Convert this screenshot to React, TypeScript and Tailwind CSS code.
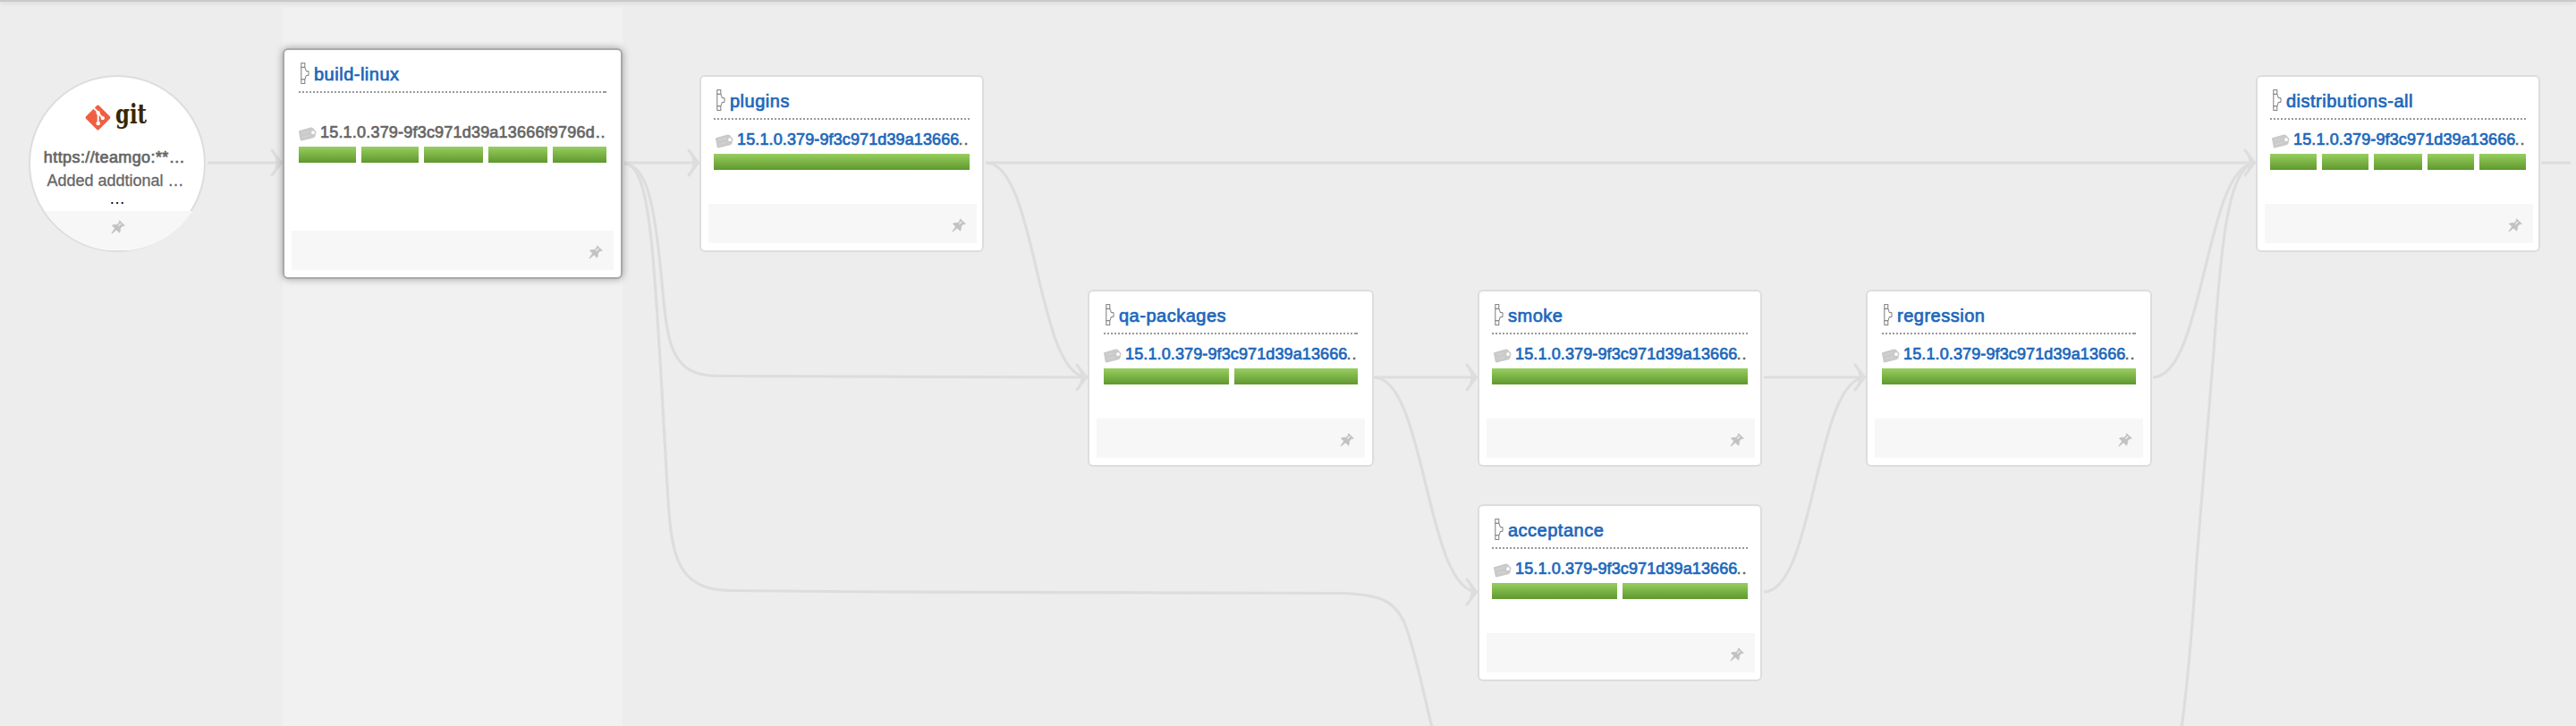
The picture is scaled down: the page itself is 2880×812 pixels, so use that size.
import React from "react";

type Stage = {
  name: string;
  left: number;
  top: number;
  width: number;
  bars: number[];
  current?: boolean;
};

const stages: Stage[] = [
  { name: "build-linux", left: 316, top: 54, width: 380, bars: [64, 64, 66, 66, 60], current: true },
  { name: "plugins", left: 782, top: 84, width: 318, bars: [286] },
  { name: "qa-packages", left: 1216, top: 324, width: 320, bars: [140, 138] },
  { name: "smoke", left: 1652, top: 324, width: 318, bars: [286] },
  { name: "acceptance", left: 1652, top: 564, width: 318, bars: [140, 140] },
  { name: "regression", left: 2086, top: 324, width: 320, bars: [284] },
  { name: "distributions-all", left: 2522, top: 84, width: 318, bars: [52, 52, 54, 52, 52] },
];

const links = [
  "M232 182H316",
  "M698 182H782",
  "M698 183C722 184 731 225 738.5 300C746 380 746 420 802 420.5C900 421.5 1000 422 1216 422",
  "M698 183C717 184 725 225 731 300C738 385 742 480 747 560C751 620 757 660 815 660.5L980 662L1500 663.5C1540 665 1558 670 1570 696C1582 726 1592 778 1601 814",
  "M1102 182H2522",
  "M1102 182C1160 182 1158 422 1216 422",
  "M1536 422H1652",
  "M1536 422C1594 422 1594 662 1652 662",
  "M1972 422H2086",
  "M1972 662C2029 662 2029 422 2086 422",
  "M2407 422C2465 422 2465 182 2522 182",
  "M2439 814C2447 755 2452 690 2456 626C2463 548 2469 470 2475 393C2483 270 2492 184 2522 182",
  "M2841 182H2874",
];

const arrows: { x: number; y: number; solid: boolean }[] = [
  { x: 316, y: 182, solid: true },
  { x: 782, y: 182, solid: false },
  { x: 1216, y: 422, solid: true },
  { x: 1652, y: 422, solid: false },
  { x: 1652, y: 662, solid: false },
  { x: 2086, y: 422, solid: true },
  { x: 2522, y: 182, solid: true },
];

function PipeIcon() {
  return (
    <svg className="h-6 w-[10px] shrink-0" viewBox="0 0 10 24" fill="#fff" stroke="#7c7c7c" strokeWidth="1">
      <path d="M0.8 5.2V18.8H4.8L6.2 15V14.4H9V9.6H6.2V9L4.8 5.2Z" />
      <rect x="0.8" y="0.6" width="4" height="4.6" />
      <rect x="0.8" y="18.8" width="4" height="4.6" />
    </svg>
  );
}

function TagIcon() {
  return (
    <svg className="h-4 w-5 shrink-0" viewBox="0 0 20 16">
      <path
        fillRule="evenodd"
        fill="#cacaca"
        d="M0.3 4.2L13.2 0.6Q14.6 0.4 15.8 1L19.6 5.2L18.4 10.6Q17.9 11.8 16.4 12.2L3.2 15.4Q2 15.6 1.7 14.4L0 5.4Q-0.1 4.5 0.3 4.2ZM16 4.3A1.9 1.9 0 1 0 16 8.1A1.9 1.9 0 1 0 16 4.3Z"
      />
      <path d="M3.2 6.8L11.5 4.8M4 11.6L12.5 9.4" stroke="#d8d8d8" strokeWidth="0.8" />
    </svg>
  );
}

function PinIcon() {
  return (
    <svg className="size-4 shrink-0" viewBox="0 0 16 16">
      <path
        fill="#c2c2c2"
        stroke="#c2c2c2"
        strokeWidth="0.6"
        strokeLinejoin="round"
        d="M9.7 0.8L15.4 6.2Q14.2 7 12.9 6.7L10.6 9.2Q11 11.8 9.6 14.3L6.1 11L1.4 15L0.9 14.6L4.5 9.4L1.3 6.2Q3.6 4.9 6.6 5.4L9.2 3.2Q8.8 1.8 9.7 0.8Z"
      />
      <path d="M8.6 6.4L11 4.2" stroke="#ededed" strokeWidth="1.4" strokeLinecap="round" />
    </svg>
  );
}

function StageCard({ stage }: { stage: Stage }) {
  const { current } = stage;
  const narrow = stage.width === 318;
  return (
    <section
      className={
        "absolute flex flex-col rounded-md border-2 bg-white " +
        (current
          ? "h-[258px] border-[#a9a9a9] shadow-[0_0_8px_rgba(0,0,0,0.35)]"
          : "h-[198px] border-[#dddddd]")
      }
      style={{ left: stage.left, top: stage.top, width: stage.width }}
    >
      <div className={"flex flex-col " + (narrow ? "px-[14px]" : "px-4")}>
        <header className={"flex h-[46px] items-start pt-[14px] " + (narrow ? "pl-[3px]" : "pl-[2px]")}>
          <PipeIcon />
          <h2 className="mt-px ml-[5px] text-[20px] leading-6 tracking-[0.5px] whitespace-nowrap text-[#2067bb] [-webkit-text-stroke:0.7px_#2067bb]">
            {stage.name}
          </h2>
        </header>
        <div className="flex h-[2px]">
          <div className="flex-1 bg-[repeating-linear-gradient(to_right,#999_0_2px,transparent_2px_4px)]" />
          {!narrow && <div className="w-1 bg-[#999]" />}
        </div>
        <div
          className={
            "flex h-5 items-start overflow-hidden whitespace-nowrap text-[18px] leading-5 text-[#666] " +
            (current ? "mt-[34px]" : "mt-3") +
            (narrow ? " pl-[2px]" : "")
          }
        >
          <div className="mt-1 mr-1">
            <TagIcon />
          </div>
          {current ? (
            <span className="tracking-[0.2px] [-webkit-text-stroke:0.7px_#666]">
              15.1.0.379-9f3c971d39a13666f9796d…
            </span>
          ) : (
            <>
              <span className="tracking-[0.12px] text-[#2067bb] [-webkit-text-stroke:0.7px_#2067bb]">
                15.1.0.379-9f3c971d39a13666
              </span>
              <span className="-ml-px tracking-[1px] [-webkit-text-stroke:0.5px_#666]">..</span>
            </>
          )}
        </div>
        <div className="mt-1.5 flex gap-1.5">
          {stage.bars.map((w, i) => (
            <div key={i} className="h-[18px] bg-linear-to-b from-[#98cf60] to-[#5f982c]" style={{ width: w }} />
          ))}
        </div>
      </div>
      <footer
        className={
          "mt-auto mb-2 ml-2 flex h-11 items-center justify-end bg-[#f7f7f7] pt-1 pr-3 " +
          (narrow ? "mr-1.5" : "mr-2")
        }
      >
        <PinIcon />
      </footer>
    </section>
  );
}

function Material() {
  return (
    <section className="absolute top-[84px] left-8 flex size-[198px] flex-col items-center rounded-full border-2 border-[#dddddd] bg-white">
      <svg className="mt-[30px] mr-[5px] h-[34px] w-[72px] overflow-visible" viewBox="0 0 72 34">
        <rect x="6.2" y="5.2" width="20.6" height="20.6" rx="1.6" transform="rotate(45 16.5 15.5)" fill="#f05f42" />
        <path
          d="M12 5L16.7 9.7V22M16.7 10.5L21.8 15.9"
          fill="none"
          stroke="#fff"
          strokeWidth="1.9"
        />
        <circle cx="16.7" cy="10.3" r="2.2" fill="#fff" />
        <circle cx="16.7" cy="22" r="2.3" fill="#fff" />
        <circle cx="21.8" cy="16.1" r="2.2" fill="#fff" />
        <text
          x="36"
          y="22.4"
          fill="#362701"
          fontFamily="DejaVu Serif"
          fontWeight="700"
          fontSize="29"
          textLength="35"
          lengthAdjust="spacingAndGlyphs"
        >
          git
        </text>
      </svg>
      <p className="mt-4 mr-[6px] text-[18px] leading-5 tracking-[0.4px] text-[#666] [-webkit-text-stroke:0.7px_#666]">
        https://teamgo:**…
      </p>
      <p className="mt-[6px] mr-[4px] text-[18px] leading-5 text-[#666] [-webkit-text-stroke:0.3px_#666]">
        Added addtional …
      </p>
      <p className="text-[18px] leading-5 text-black">…</p>
      <div className="absolute top-[-2px] left-0 h-[197px] w-[197px] overflow-hidden rounded-full">
        <footer className="mt-[152px] flex h-[44px] justify-center bg-[#f7f7f7] pt-[10px] pr-[1px]">
          <PinIcon />
        </footer>
      </div>
    </section>
  );
}

export default function App() {
  return (
    <main className="relative h-[812px] w-[2880px] overflow-hidden bg-[#ededed] font-['Liberation_Sans',Arial,sans-serif]">
      <div className="h-[2px] bg-[#cacaca] shadow-[0_1px_5px_rgba(0,0,0,0.15)]" />
      <div className="absolute top-2 left-[316px] h-[804px] w-[380px] bg-[#f1f1f1]" />
      <svg className="absolute inset-0" width="2880" height="812" viewBox="0 0 2880 812">
        <g fill="none" stroke="#dddddd" strokeWidth="3.2">
          {links.map((d) => (
            <path key={d} d={d} />
          ))}
        </g>
        {arrows.map(({ x, y, solid }) => (
          <path
            key={`${x}-${y}`}
            transform={`translate(${x} ${y})`}
            d="M-12 -14L-1.5 0L-12 14Q0 0 -12 -14Z"
            fill={solid ? "#dddddd" : "none"}
            stroke="#dddddd"
            strokeWidth="3"
            strokeLinejoin="round"
          />
        ))}
      </svg>
      <Material />
      {stages.map((s) => (
        <StageCard key={s.name} stage={s} />
      ))}
    </main>
  );
}
